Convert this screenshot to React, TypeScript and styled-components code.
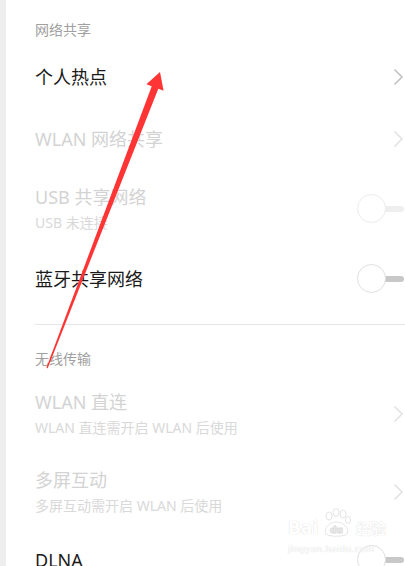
import styled, { createGlobalStyle } from "styled-components";

const GlobalStyle = createGlobalStyle`
  html, body {
    margin: 0;
    padding: 0;
    background: #ffffff;
  }
  body {
    font-family: "Noto Sans", "Noto Sans CJK SC", sans-serif;
    -webkit-font-smoothing: antialiased;
  }
`;

// Page frame with the grey strip on the left
const Page = styled.div`
  position: relative;
  width: 405px;
  height: 566px;
  overflow: hidden;
  display: flex;
  background: #ffffff;
`;

const Strip = styled.div`
  width: 6px;
  flex-shrink: 0;
  background: #eeeeee;
`;

const Content = styled.div`
  flex: 1;
  padding-left: 29px;
`;

const SectionTitle = styled.div<{ $top: number; $bottom: number }>`
  padding: ${(p) => p.$top}px 0 ${(p) => p.$bottom}px 0;
  font-size: 14px;
  line-height: 20px;
  color: #a0a0a0;
`;

const Row = styled.div<{ $h: number }>`
  height: ${(p) => p.$h}px;
  display: flex;
  align-items: center;
  justify-content: space-between;
`;

const Texts = styled.div`
  display: flex;
  flex-direction: column;
`;

const Title = styled.div<{ $off?: boolean }>`
  font-size: 18px;
  line-height: 24px;
  color: ${(p) => (p.$off ? "#d3d3d3" : "#1a1a1a")};
`;

const Sub = styled.div`
  margin-top: 4px;
  font-size: 14px;
  line-height: 20px;
  color: #d9d9d9;
`;

const Divider = styled.div`
  height: 1px;
  background: #e6e6e6;
`;

const Spacer = styled.div<{ $h: number }>`
  height: ${(p) => p.$h}px;
`;

const SwitchBox = styled.div`
  position: relative;
  width: 47px;
  height: 30px;
  margin-right: 1px;
  flex-shrink: 0;
`;

const Track = styled.div<{ $off?: boolean }>`
  position: absolute;
  left: 14px;
  right: 0;
  top: 12px;
  height: 6px;
  border-radius: 3px;
  background: ${(p) => (p.$off ? "#eeeeee" : "#c8c8c8")};
`;

const Knob = styled.div<{ $off?: boolean }>`
  position: absolute;
  left: 0;
  top: 0;
  width: 27px;
  height: 27px;
  border-radius: 50%;
  background: #ffffff;
  border: 1px solid ${(p) => (p.$off ? "#ececec" : "#e0e0e0")};
`;

const Overlay = styled.svg`
  position: absolute;
  left: 0;
  top: 0;
  pointer-events: none;
`;

const Watermark = styled.div`
  position: absolute;
  left: 288px;
  top: 508px;
  color: #ffffff;
  text-shadow: 0 0 1px #dedede, 0 0 1px #dedede;
  font-family: "DejaVu Sans", sans-serif;
`;

const WmTop = styled.div`
  display: flex;
  align-items: flex-end;
  gap: 2px;
  font-size: 17px;
  font-weight: bold;
  line-height: 20px;
`;

const WmSmall = styled.div`
  font-size: 9px;
  line-height: 12px;
  margin-top: 5px;
  letter-spacing: 0.2px;
`;

const Chevron = ({ off }: { off?: boolean }) => (
  <svg width="11" height="18" viewBox="0 0 11 18" style={{ marginRight: 1 }}>
    <path
      d="M1.5 1.5 L9 9 L1.5 16.5"
      fill="none"
      stroke={off ? "#e2e2e2" : "#c2c2c2"}
      strokeWidth="1.6"
    />
  </svg>
);

const Switch = ({ off }: { off?: boolean }) => (
  <SwitchBox>
    <Track $off={off} />
    <Knob $off={off} />
  </SwitchBox>
);

export default function App() {
  return (
    <>
      <GlobalStyle />
      <Page>
        <Strip />
        <Content>
          <SectionTitle $top={20} $bottom={6}>网络共享</SectionTitle>
          <Row $h={62}>
            <Title>个人热点</Title>
            <Chevron />
          </Row>
          <Row $h={62}>
            <Title $off>WLAN 网络共享</Title>
            <Chevron off />
          </Row>
          <Row $h={78}>
            <Texts>
              <Title $off>USB 共享网络</Title>
              <Sub>USB 未连接</Sub>
            </Texts>
            <Switch off />
          </Row>
          <Row $h={62}>
            <Title>蓝牙共享网络</Title>
            <Switch />
          </Row>
          <Spacer $h={14} />
          <Divider />
          <SectionTitle $top={24} $bottom={6}>无线传输</SectionTitle>
          <Row $h={78}>
            <Texts>
              <Title $off>WLAN 直连</Title>
              <Sub>WLAN 直连需开启 WLAN 后使用</Sub>
            </Texts>
            <Chevron off />
          </Row>
          <Row $h={78}>
            <Texts>
              <Title $off>多屏互动</Title>
              <Sub>多屏互动需开启 WLAN 后使用</Sub>
            </Texts>
            <Chevron off />
          </Row>
          <Row $h={58}>
            <Title>DLNA</Title>
            <Switch />
          </Row>
        </Content>

        <Watermark>
          <WmTop>
            <span>Bai</span>
            <svg width="34" height="30" viewBox="0 0 34 30">
              <g fill="#ffffff" stroke="#dddddd" strokeWidth="0.8">
                <ellipse cx="9" cy="8" rx="3" ry="4" />
                <ellipse cx="16" cy="4.5" rx="3" ry="4" />
                <ellipse cx="23" cy="6" rx="3" ry="4" />
                <ellipse cx="28" cy="12" rx="2.6" ry="3.4" />
                <path d="M6 26 C3 20 10 14 16 14 C23 14 30 20 27 26 C24 29 9 29 6 26 Z" />
              </g>
              <text x="10" y="25" fontSize="9" fill="#ffffff" stroke="#dddddd" strokeWidth="0.5" fontFamily="DejaVu Sans, sans-serif">du</text>
            </svg>
            <span style={{ fontFamily: '"Noto Sans CJK SC", sans-serif', fontSize: 15 }}>经验</span>
          </WmTop>
          <WmSmall>jingyan.baidu.com</WmSmall>
        </Watermark>

        <Overlay width="405" height="566" viewBox="0 0 405 566">
          <polygon
            points="46.5,367.6 47.6,368.4 158.3,88.8 163.6,90.7 160,72 146.4,84.3 151.7,86.3"
            fill="#ff3535"
          />
        </Overlay>
      </Page>
    </>
  );
}
